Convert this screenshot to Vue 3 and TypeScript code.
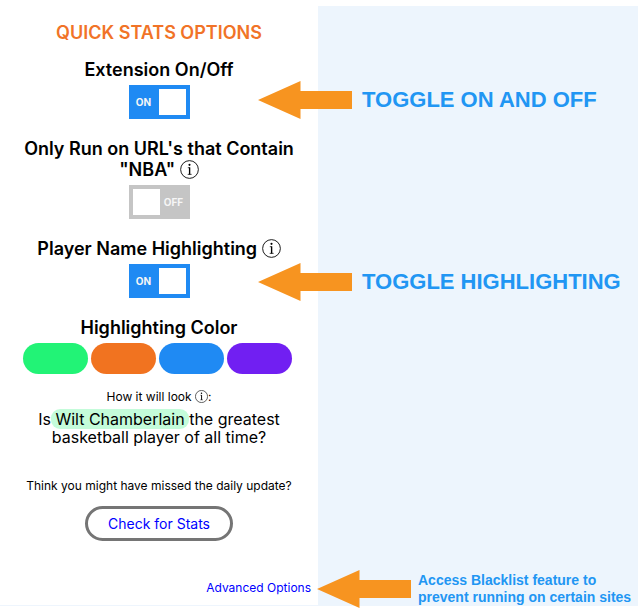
<script setup lang="ts">
import { h, ref, type FunctionalComponent } from 'vue'

interface Swatch {
  name: string
  color: string
}

const swatches: Swatch[] = [
  { name: 'Green', color: '#22f376' },
  { name: 'Orange', color: '#f17320' },
  { name: 'Blue', color: '#1f8af3' },
  { name: 'Purple', color: '#711ff2' },
]

const extensionOn = ref(true)
const nbaOnly = ref(false)
const highlighting = ref(true)
const selected = ref(swatches[0].color)

const InfoIcon: FunctionalComponent = () =>
  h('svg', { viewBox: '0 0 18 18', 'aria-hidden': 'true' }, [
    h('circle', { cx: 9, cy: 9, r: 8.4, fill: 'none', stroke: 'currentColor', 'stroke-width': 0.85 }),
    h('circle', { cx: 9, cy: 4.6, r: 1, fill: 'currentColor' }),
    h('path', { d: 'M7.4 7.3H9.3M7.3 13.6H11', fill: 'none', stroke: 'currentColor', 'stroke-width': 0.7 }),
    h('path', { d: 'M9.1 7V13.8', fill: 'none', stroke: 'currentColor', 'stroke-width': 1.3 }),
  ])

const ArrowLeft: FunctionalComponent = () =>
  h('svg', { viewBox: '0 0 94 38', 'aria-hidden': 'true' }, [
    h('path', { d: 'M0 19L42.5 0V10H94V28H42.5V38Z', fill: '#f79420' }),
  ])
</script>

<template>
  <div class="page">
    <main class="popup">
      <h1>Quick Stats Options</h1>

      <section class="option">
        <h2 id="ext-title">Extension On/Off</h2>
        <label class="toggle" :class="{ on: extensionOn }">
          <input v-model="extensionOn" type="checkbox" aria-labelledby="ext-title" />
          <span class="state">{{ extensionOn ? 'ON' : 'OFF' }}</span>
          <span class="knob"></span>
        </label>
      </section>

      <section class="option">
        <h2 id="nba-title">Only Run on URL's that Contain "NBA" <InfoIcon class="info" /></h2>
        <label class="toggle" :class="{ on: nbaOnly }">
          <input v-model="nbaOnly" type="checkbox" aria-labelledby="nba-title" />
          <span class="state">{{ nbaOnly ? 'ON' : 'OFF' }}</span>
          <span class="knob"></span>
        </label>
      </section>

      <section class="option">
        <h2 id="hl-title">Player Name Highlighting <InfoIcon class="info" /></h2>
        <label class="toggle" :class="{ on: highlighting }">
          <input v-model="highlighting" type="checkbox" aria-labelledby="hl-title" />
          <span class="state">{{ highlighting ? 'ON' : 'OFF' }}</span>
          <span class="knob"></span>
        </label>
      </section>

      <section class="option">
        <h2>Highlighting Color</h2>
        <div class="swatches">
          <button
            v-for="s in swatches"
            :key="s.name"
            type="button"
            class="swatch"
            :aria-label="s.name"
            :style="{ backgroundColor: s.color }"
            @click="selected = s.color"
          ></button>
        </div>
      </section>

      <p class="note look">How it will look <InfoIcon class="info small" />:</p>
      <p class="sample">
        Is<mark :style="{ backgroundColor: selected + '44' }"> Wilt Chamberlain </mark>the greatest basketball player of all time?
      </p>

      <p class="note">Think you might have missed the daily update?</p>
      <button type="button" class="check">Check for Stats</button>
      <a class="advanced" href="#advanced">Advanced Options</a>
    </main>

    <aside class="guide">
      <p class="callout"><ArrowLeft class="arrow" />TOGGLE ON AND OFF</p>
      <p class="callout second"><ArrowLeft class="arrow" />TOGGLE HIGHLIGHTING</p>
      <p class="callout last">
        <ArrowLeft class="arrow" />
        <span>Access Blacklist feature to<br />prevent running on certain sites</span>
      </p>
    </aside>
  </div>
</template>

<style>
body {
  margin: 0;
  background: #fff;
}
</style>

<style scoped>
.page {
  display: grid;
  grid-template-columns: 318px 1fr;
  padding: 6px 0 4px;
}
.popup {
  display: flex;
  flex-direction: column;
  align-items: center;
  box-sizing: border-box;
  padding: 16px 20px 9px;
  border-bottom: 1px solid #eef5fd;
  color: #000;
  font-family: Inter, "Liberation Sans", sans-serif;
  text-align: center;
}
h1,
h2,
p {
  margin: 0;
}
h1 {
  margin-bottom: 15px;
  color: #f17327;
  font-size: 18px;
  font-weight: 600;
  line-height: 22px;
  text-transform: uppercase;
}
h2 {
  margin-bottom: 5px;
  font-size: 18px;
  font-weight: 600;
  line-height: 21px;
}
.option {
  display: flex;
  flex-direction: column;
  align-items: center;
  width: 100%;
}
.option + .option {
  margin-top: 19px;
}
.info {
  width: 19px;
  height: 19px;
  vertical-align: -3px;
}
.info.small {
  width: 13px;
  height: 13px;
  vertical-align: -2px;
}
.toggle {
  display: flex;
  align-items: center;
  flex-direction: row-reverse;
  box-sizing: border-box;
  width: 61px;
  height: 34px;
  padding: 4px;
  background: #c5c5c5;
  color: #f6f6f6;
  cursor: pointer;
}
.toggle.on {
  flex-direction: row;
  background: #1f8af3;
}
.toggle input {
  position: absolute;
  opacity: 0;
}
.state {
  flex: 1;
  padding-left: 2px;
  font-size: 10px;
  font-weight: 700;
}
.on .state {
  padding: 0 4px 0 0;
}
.knob {
  width: 27px;
  height: 26px;
  background: #fff;
}
.swatches {
  display: flex;
  gap: 3px;
  margin-right: 4px;
}
.swatch {
  width: 65px;
  height: 31px;
  padding: 0;
  border: 0;
  border-radius: 16px;
}
.note {
  font-size: 12px;
  line-height: 16px;
}
.look {
  margin-top: 15px;
}
.sample {
  margin: 5px 0 32px;
  font-size: 16px;
  line-height: 18px;
}
mark {
  border-radius: 9px;
  color: inherit;
}
.check {
  width: 148px;
  height: 35px;
  margin: 12px 0 39px;
  padding: 0;
  border: 3px solid #757575;
  border-radius: 18px;
  background: #fff;
  color: #00f;
  font-family: inherit;
  font-size: 14px;
}
.advanced {
  align-self: flex-end;
  margin-right: -13px;
  color: #00f;
  font-size: 12px;
  line-height: 16px;
  text-decoration: none;
}
.guide {
  padding-top: 75px;
  background: #edf5fd;
  color: #2196f3;
  font-family: "Liberation Sans", Arial, sans-serif;
}
.callout {
  display: flex;
  align-items: center;
  gap: 10px;
  margin-left: -60px;
  font-size: 22px;
  font-weight: 700;
  white-space: nowrap;
}
.arrow {
  flex: none;
  width: 94px;
  height: 38px;
}
.second {
  margin-top: 144px;
}
.last {
  gap: 7px;
  margin: 269px 0 -2px -1px;
  font-size: 14px;
  line-height: 17px;
}
</style>
